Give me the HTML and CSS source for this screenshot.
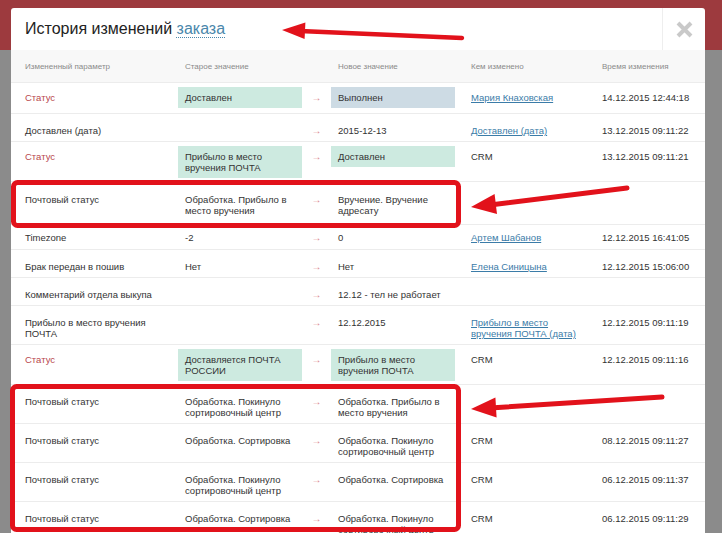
FILE: index.html
```html
<!DOCTYPE html>
<html>
<head>
    <title>История изменений заказа</title>
    <link rel="stylesheet" href="styles.css">
</head>
<body>
    <div class="modal">
        <div class="modal-head">
            <div class="modal-title">История изменений <a href="#">заказа</a></div>
            <div class="close">
                <svg width="17" height="17" viewBox="0 0 17 17"><path d="M2 2 L15 15 M15 2 L2 15" stroke="#c9c9c9" stroke-width="4"/></svg>
            </div>
        </div>

        <div class="thead">
            <div class="c-param">Измененный параметр</div>
            <div class="c-old"><span class="val">Старое значение</span></div>
            <div></div>
            <div class="c-new"><span class="val">Новое значение</span></div>
            <div class="c-who">Кем изменено</div>
            <div class="c-time">Время изменения</div>
        </div>

        <div class="row boxed">
            <div class="cell c-param status">Статус</div>
            <div class="cell c-old"><span class="val green">Доставлен</span></div>
            <div class="cell c-arrow">→</div>
            <div class="cell c-new"><span class="val blue">Выполнен</span></div>
            <div class="cell c-who"><a href="#">Мария Кнаховская</a></div>
            <div class="cell c-time">14.12.2015 12:44:18</div>
        </div>
        <div class="row">
            <div class="cell c-param">Доставлен (дата)</div>
            <div class="cell c-old"></div>
            <div class="cell c-arrow">→</div>
            <div class="cell c-new"><span class="val">2015-12-13</span></div>
            <div class="cell c-who"><a href="#">Доставлен (дата)</a></div>
            <div class="cell c-time">13.12.2015 09:11:22</div>
        </div>
        <div class="row boxed">
            <div class="cell c-param status">Статус</div>
            <div class="cell c-old"><span class="val green">Прибыло в место вручения ПОЧТА</span></div>
            <div class="cell c-arrow">→</div>
            <div class="cell c-new"><span class="val green">Доставлен</span></div>
            <div class="cell c-who">CRM</div>
            <div class="cell c-time">13.12.2015 09:11:21</div>
        </div>
        <div class="row tall">
            <div class="cell c-param">Почтовый статус</div>
            <div class="cell c-old"><span class="val">Обработка. Прибыло в место вручения</span></div>
            <div class="cell c-arrow">→</div>
            <div class="cell c-new"><span class="val">Вручение. Вручение адресату</span></div>
            <div class="cell c-who"></div>
            <div class="cell c-time"></div>
        </div>
        <div class="row short">
            <div class="cell c-param">Timezone</div>
            <div class="cell c-old"><span class="val">-2</span></div>
            <div class="cell c-arrow">→</div>
            <div class="cell c-new"><span class="val">0</span></div>
            <div class="cell c-who"><a href="#">Артем Шабанов</a></div>
            <div class="cell c-time">12.12.2015 16:41:05</div>
        </div>
        <div class="row">
            <div class="cell c-param">Брак передан в пошив</div>
            <div class="cell c-old"><span class="val">Нет</span></div>
            <div class="cell c-arrow">→</div>
            <div class="cell c-new"><span class="val">Нет</span></div>
            <div class="cell c-who"><a href="#">Елена Синицына</a></div>
            <div class="cell c-time">12.12.2015 15:06:00</div>
        </div>
        <div class="row">
            <div class="cell c-param">Комментарий отдела выкупа</div>
            <div class="cell c-old"></div>
            <div class="cell c-arrow">→</div>
            <div class="cell c-new wide"><span class="val">12.12 - тел не работает</span></div>
            <div class="cell c-time"></div>
        </div>
        <div class="row">
            <div class="cell c-param">Прибыло в место вручения ПОЧТА</div>
            <div class="cell c-old"></div>
            <div class="cell c-arrow">→</div>
            <div class="cell c-new"><span class="val">12.12.2015</span></div>
            <div class="cell c-who"><a href="#">Прибыло в место<br>вручения ПОЧТА (дата)</a></div>
            <div class="cell c-time">12.12.2015 09:11:19</div>
        </div>
        <div class="row boxed">
            <div class="cell c-param status">Статус</div>
            <div class="cell c-old"><span class="val green">Доставляется ПОЧТА РОССИИ</span></div>
            <div class="cell c-arrow">→</div>
            <div class="cell c-new"><span class="val green">Прибыло в место вручения ПОЧТА</span></div>
            <div class="cell c-who">CRM</div>
            <div class="cell c-time">12.12.2015 09:11:16</div>
        </div>
        <div class="row">
            <div class="cell c-param">Почтовый статус</div>
            <div class="cell c-old"><span class="val">Обработка. Покинуло сортировочный центр</span></div>
            <div class="cell c-arrow">→</div>
            <div class="cell c-new"><span class="val">Обработка. Прибыло в место вручения</span></div>
            <div class="cell c-who"></div>
            <div class="cell c-time"></div>
        </div>
        <div class="row">
            <div class="cell c-param">Почтовый статус</div>
            <div class="cell c-old"><span class="val">Обработка. Сортировка</span></div>
            <div class="cell c-arrow">→</div>
            <div class="cell c-new"><span class="val">Обработка. Покинуло сортировочный центр</span></div>
            <div class="cell c-who">CRM</div>
            <div class="cell c-time">08.12.2015 09:11:27</div>
        </div>
        <div class="row">
            <div class="cell c-param">Почтовый статус</div>
            <div class="cell c-old"><span class="val">Обработка. Покинуло сортировочный центр</span></div>
            <div class="cell c-arrow">→</div>
            <div class="cell c-new"><span class="val">Обработка. Сортировка</span></div>
            <div class="cell c-who">CRM</div>
            <div class="cell c-time">06.12.2015 09:11:37</div>
        </div>
        <div class="row">
            <div class="cell c-param">Почтовый статус</div>
            <div class="cell c-old"><span class="val">Обработка. Сортировка</span></div>
            <div class="cell c-arrow">→</div>
            <div class="cell c-new"><span class="val">Обработка. Покинуло сортировочный центр</span></div>
            <div class="cell c-who">CRM</div>
            <div class="cell c-time">06.12.2015 09:11:29</div>
        </div>
    </div>

    <!-- пометки поверх скриншота -->
    <svg class="marks" width="722" height="533" viewBox="0 0 722 533">
        <g fill="none" stroke="#e2121b" stroke-width="5">
            <rect x="13.5" y="182.5" width="445" height="43" rx="4"/>
            <rect x="12.5" y="386.5" width="446" height="143" rx="4"/>
        </g>
        <g stroke="#e2121b" stroke-linecap="round">
            <line x1="300" y1="31" x2="462" y2="38" stroke-width="4.5"/>
            <line x1="490" y1="205" x2="627" y2="188" stroke-width="5"/>
            <line x1="490" y1="408" x2="662" y2="397" stroke-width="5"/>
        </g>
        <g fill="#e2121b">
            <polygon points="282,30 305.4,22.5 304.6,39"/>
            <polygon points="471,207 494.6,194 497,214"/>
            <polygon points="471,409 495.4,397.4 496.6,417.4"/>
        </g>
    </svg>
</body>
</html>
```

FILE: styles.css
```css
body {
    margin: 0;
    height: 533px;
    overflow: hidden;
    font-family: "Liberation Sans", Arial, sans-serif;
    background: linear-gradient(#9d3a3e 0, #9d3a3e 50px, #8b8b8b 50px);
}
.modal {
    margin: 8px 0 0 11px;
    width: 694px;
    background: #fff;
    border-radius: 3px 3px 0 0;
}
.modal-head {
    display: flex;
    height: 42px;
}
.modal-title {
    flex: 1;
    padding: 0 14px;
    font-size: 16px;
    line-height: 42px;
    color: #222;
}
.modal-title a {
    color: #4a87ab;
    text-decoration: underline dotted;
    text-decoration-thickness: 1px;
    text-underline-offset: 3px;
}
.close {
    width: 42px;
    border-left: 1px solid #eee;
    display: flex;
    align-items: center;
    justify-content: center;
}

.thead, .row {
    display: grid;
    grid-template-columns: 167px 124px 29px 124px 147px 103px;
}
.thead {
    height: 32px;
    align-items: center;
    background: #f8f8f8;
    font-size: 8px;
    color: #8a8a8a;
}
.row {
    border-top: 1px solid #ececec;
    font-size: 9.5px;
    line-height: 11px;
    color: #333;
}
.cell {
    padding-top: 11px;
    padding-bottom: 5px;
}
.c-param {
    padding-left: 14px;
    padding-right: 20px;
}
.status {
    color: #b9474e;
}
.val {
    display: block;
    padding: 0 7px;
}
.c-arrow {
    text-align: center;
    color: #d9838a;
    font-size: 10px;
}
.c-who {
    padding-left: 16px;
}
.c-who a {
    color: #3b7ca8;
}
.c-new.wide {
    grid-column: span 2;
}

/* строки со статусом - значения в плашках */
.row.boxed .cell {
    padding-top: 9px;
    padding-bottom: 10px;
}
.row.boxed .c-old,
.row.boxed .c-new {
    padding-top: 4px;
    padding-bottom: 3px;
}
.row.boxed .val {
    padding: 5px 7px;
}
.green { background: #cdeae0; }
.blue { background: #cddbe4; }

.row.short .cell {
    padding-top: 7px;
    padding-bottom: 6px;
}
.row.tall .cell {
    padding-top: 12px;
    padding-bottom: 8px;
}

.marks {
    position: absolute;
    top: 0;
    left: 0;
    pointer-events: none;
}
```
